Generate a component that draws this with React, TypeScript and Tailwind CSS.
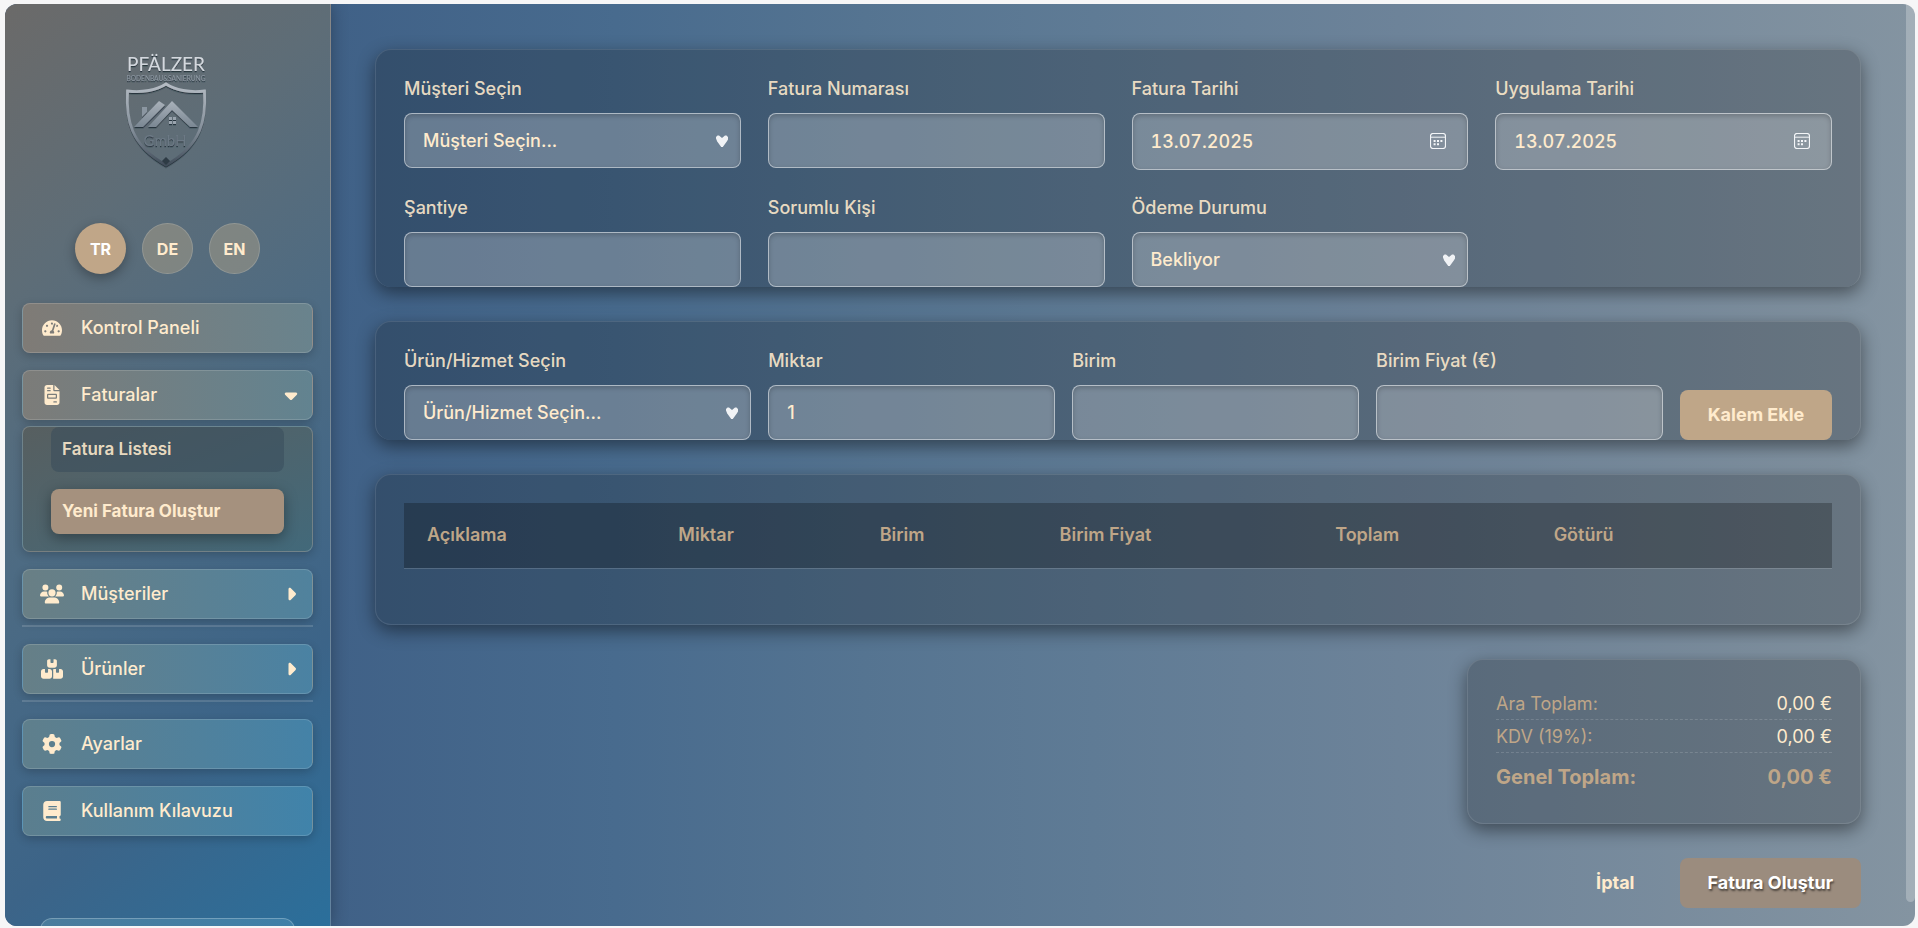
import type { ReactNode } from 'react';
import { useState } from 'react';
import { FaTachometerAlt } from 'react-icons/fa';
import {
  FaBook,
  FaBoxesStacked,
  FaCaretDown,
  FaCaretRight,
  FaFileInvoice,
  FaGear,
  FaUsers,
} from 'react-icons/fa6';

const cardClass =
  'rounded-2xl border border-white/10 bg-black/20 px-7 shadow-[0_6px_18px_rgba(0,0,0,0.45)]';
const fieldClass =
  'block w-full rounded-lg border border-white/45 bg-white/25 px-[18px] text-lg font-medium text-[#ffebcd] shadow-[inset_0_2px_5px_rgba(0,0,0,0.2)] outline-none';

function Logo() {
  return (
    <svg viewBox="0 0 84 118" className="h-[118px] w-[84px]" role="img" aria-label="Pfälzer Bodenbau & Sanierung GmbH">
      <defs>
        <linearGradient id="metal" x1="0" y1="0" x2="0" y2="1">
          <stop offset="0" stopColor="#b4bbc3" />
          <stop offset="0.55" stopColor="#86919c" />
          <stop offset="1" stopColor="#414d5a" />
        </linearGradient>
        <linearGradient id="roof" x1="0" y1="0" x2="0" y2="1">
          <stop offset="0" stopColor="#a9b1ba" />
          <stop offset="1" stopColor="#7a8793" />
        </linearGradient>
        <filter id="relief" x="-10%" y="-10%" width="120%" height="125%">
          <feDropShadow dx="0" dy="1.2" stdDeviation="0.6" floodColor="#1c2732" floodOpacity="0.8" />
        </filter>
      </defs>
      <g filter="url(#relief)">
        <text x="42" y="20" textAnchor="middle" fontFamily="Lato, sans-serif" fontSize="19" fill="#d3d8de">
          PFÄLZER
        </text>
        <text x="42" y="30" textAnchor="middle" fontFamily="Lato, sans-serif" fontSize="6.6" fill="#8d98a3">
          BODENBAU&amp;SANIERUNG
        </text>
        <path
          d="M42 33 C33 39 18 42 3.5 40 C2 68 6 94 42 114 C78 94 82 68 80.5 40 C66 42 51 39 42 33 Z"
          fill="none"
          stroke="url(#metal)"
          strokeWidth="2.8"
        />
        <path d="M10 76 L35 50 L41 54 L19 76 Z" fill="url(#roof)" />
        <path d="M18 66 V56 H23 V61 Z" fill="#8b96a1" />
        <path d="M24 76 L48 50 L74 76 H66 L48 59 L32 76 Z" fill="url(#roof)" />
        <path d="M45 66 h3 v3 h-3 z M49 66 h3 v3 h-3 z M45 70 h3 v3 h-3 z M49 70 h3 v3 h-3 z" fill="#9aa4ae" />
        <text x="41" y="95" textAnchor="middle" fontFamily="Lato, sans-serif" fontSize="15" fill="#6c7985">
          GmbH
        </text>
        <path d="M42 106 l4 4 -4 4 -4 -4 z" fill="#2f3a45" />
      </g>
    </svg>
  );
}

function Heart() {
  return (
    <svg
      viewBox="0 0 12 13"
      aria-hidden="true"
      className="pointer-events-none absolute top-1/2 right-[13px] h-[13px] w-3 -translate-y-1/2"
    >
      <path d="M0 4 V2.5 L1.5 1 H3 L6 3.5 L9 1 H10.5 L12 2.5 V5 L10.8 7 L6.8 12.6 H5.2 L1.2 7 Z" fill="#f0f2f5" />
    </svg>
  );
}

function CalendarIcon() {
  return (
    <svg viewBox="0 0 16 16" className="size-4" fill="none" aria-hidden="true">
      <rect x="0.5" y="0.5" width="15" height="15" rx="2.5" stroke="#f4f6f8" strokeWidth="1.2" />
      <path d="M0.5 4.2 H15.5" stroke="#f4f6f8" />
      <path
        d="M3.600 7h2v2h-2z M7 7h2v2H7z M10.4 7h2v2h-2z M3.600 10.2h2v2h-2z M7 10.2h2v2H7z"
        fill="#f4f6f8"
      />
    </svg>
  );
}

function Field({ id, label, children }: { id: string; label: string; children: ReactNode }) {
  return (
    <div>
      <label htmlFor={id} className="mb-[13px] block text-lg leading-[22px] font-medium text-[#ffebcd]/90">
        {label}
      </label>
      {children}
    </div>
  );
}

function TextField({ id, label, value = '' }: { id: string; label: string; value?: string }) {
  const [current, setCurrent] = useState(value);
  return (
    <Field id={id} label={label}>
      <input
        id={id}
        type="text"
        value={current}
        onChange={(e) => setCurrent(e.target.value)}
        className={`${fieldClass} h-[55px]`}
      />
    </Field>
  );
}

function DateField({ id, label }: { id: string; label: string }) {
  const [current, setCurrent] = useState('13.07.2025');
  return (
    <Field id={id} label={label}>
      <div className="relative">
        <input
          id={id}
          type="text"
          inputMode="numeric"
          value={current}
          onChange={(e) => setCurrent(e.target.value)}
          className={`${fieldClass} h-[57px] tabular-nums`}
        />
        <button type="button" aria-label={`${label}: takvim`} className="absolute top-5 right-[22px]">
          <CalendarIcon />
        </button>
      </div>
    </Field>
  );
}

function SelectField({ id, label, option }: { id: string; label: string; option: string }) {
  return (
    <Field id={id} label={label}>
      <div className="relative">
        <select id={id} className={`${fieldClass} h-[55px] appearance-none`}>
          <option>{option}</option>
        </select>
        <Heart />
      </div>
    </Field>
  );
}

function NavItem({
  icon,
  label,
  caret,
  tone,
}: {
  icon: ReactNode;
  label: string;
  caret?: ReactNode;
  tone: string;
}) {
  return (
    <a
      href="#"
      className={`flex h-[50px] shrink-0 items-center rounded-lg border border-white/15 bg-linear-to-r px-[13px] text-lg font-medium text-[#ffebcd] shadow-[0_3px_10px_rgba(0,0,0,0.2)] ${tone}`}
    >
      <span className="flex w-8 justify-center text-xl">{icon}</span>
      <span className="ml-[13px] flex-1">{label}</span>
      {caret && <span className="flex w-4 justify-center">{caret}</span>}
    </a>
  );
}

function Language({ code, active = false }: { code: string; active?: boolean }) {
  return (
    <button
      type="button"
      aria-pressed={active}
      className={`size-[51px] rounded-full text-base font-bold ${
        active
          ? 'bg-[#c0a688] text-white shadow-[0_4px_12px_rgba(0,0,0,0.3)]'
          : 'border border-white/15 bg-[#a89d88]/50 text-[#ffebcd]'
      }`}
    >
      {code}
    </button>
  );
}

function Sidebar() {
  return (
    <aside className="z-10 flex w-[326px] shrink-0 flex-col overflow-hidden border-r border-white/20 bg-linear-[140deg,#6b6a69_0%,#5e6d77_24%,#4d6b83_48%,#3c6488_76%,#2b6f9b_100%] px-[17px] shadow-[0_0_16px_rgba(0,0,0,0.3)]">
      <div className="flex shrink-0 justify-center pt-[47px] pr-1">
        <Logo />
      </div>
      <div className="mt-[54px] flex shrink-0 justify-center gap-4">
        <Language code="TR" active />
        <Language code="DE" />
        <Language code="EN" />
      </div>
      <nav className="mt-[29px] flex shrink-0 flex-col gap-[17px]">
        <NavItem icon={<FaTachometerAlt />} label="Kontrol Paneli" tone="from-[#7f7b76] to-[#69838d]" />
        <div>
          <NavItem
            icon={<FaFileInvoice />}
            label="Faturalar"
            caret={<FaCaretDown className="size-5 shrink-0" />}
            tone="from-[#7c7c79] to-[#628390]"
          />
          <ul className="mt-[6px] flex flex-col gap-[17px] rounded-lg border border-white/20 bg-linear-to-br from-[#575f60] to-[#42697a] px-7 pb-[17px] shadow-[0_3px_10px_rgba(0,0,0,0.2)]">
            <li>
              <a href="#" className="flex h-[45px] items-center rounded-lg bg-[#36495a]/50 px-[11px] text-[17px] font-semibold text-[#ffebcd]/90">
                Fatura Listesi
              </a>
            </li>
            <li>
              <a
                href="#"
                aria-current="page"
                className="flex h-[45px] items-center rounded-lg bg-[#a5917e] px-[11px] text-[17px] font-bold text-[#ffebcd] shadow-[0_4px_14px_rgba(0,0,0,0.35)]"
              >
                Yeni Fatura Oluştur
              </a>
            </li>
          </ul>
        </div>
        <div className="border-b-2 border-white/15 pb-[6px]">
          <NavItem
            icon={<FaUsers className="size-6" />}
            label="Müşteriler"
            caret={<FaCaretRight className="size-5 shrink-0" />}
            tone="from-[#697f85] to-[#50829d]"
          />
        </div>
        <div className="border-b-2 border-white/15 pb-[6px]">
          <NavItem
            icon={<FaBoxesStacked className="size-[22px]" />}
            label="Ürünler"
            caret={<FaCaretRight className="size-5 shrink-0" />}
            tone="from-[#667f87] to-[#4a82a3]"
          />
        </div>
        <NavItem icon={<FaGear />} label="Ayarlar" tone="from-[#5f7f8c] to-[#4482a7]" />
        <NavItem icon={<FaBook />} label="Kullanım Kılavuzu" tone="from-[#5b7e8e] to-[#4083aa]" />
      </nav>
      <button
        type="button"
        aria-label="Hesap"
        className="mx-[18px] mt-[82px] h-14 shrink-0 rounded-xl border border-white/25 bg-linear-to-r from-[#4a7c9c] to-[#3f80a8]"
      />
    </aside>
  );
}

const columns = [
  { title: 'Açıklama', width: 'w-[17.6%]' },
  { title: 'Miktar', width: 'w-[14.1%]' },
  { title: 'Birim', width: 'w-[12.6%]' },
  { title: 'Birim Fiyat', width: 'w-[19.3%]' },
  { title: 'Toplam', width: 'w-[15.3%]' },
  { title: 'Götürü', width: 'w-[21.1%]' },
];

export default function App() {
  return (
    <div className="h-screen bg-[#f6f6f7] pt-1 pr-[3px] pb-[2px] pl-[5px] font-['Inter',sans-serif]">
      <div className="flex h-full overflow-hidden rounded-xl bg-linear-[90deg,#35567c_0%,#406187_17%,#486b8e_32%,#557491_45%,#5f7b95_57%,#6d8399_73%,#8494a1_100%]">
        <Sidebar />
        <main className="flex-1 overflow-hidden pt-[45px] pr-[45px] pl-[44px]">
          <form onSubmit={(e) => e.preventDefault()} className="flex flex-col gap-[34px]">
            <section className={`${cardClass} grid grid-cols-4 gap-[27px] border-b-0 pt-7`}>
              <SelectField id="customer" label="Müşteri Seçin" option="Müşteri Seçin..." />
              <TextField id="number" label="Fatura Numarası" />
              <DateField id="invoice-date" label="Fatura Tarihi" />
              <DateField id="service-date" label="Uygulama Tarihi" />
              <TextField id="site" label="Şantiye" />
              <TextField id="contact" label="Sorumlu Kişi" />
              <SelectField id="status" label="Ödeme Durumu" option="Bekliyor" />
            </section>

            <section
              className={`${cardClass} grid grid-cols-[1.21fr_1fr_1fr_1fr_152px] items-end gap-[17px] border-b-0 pt-7`}
            >
              <SelectField id="product" label="Ürün/Hizmet Seçin" option="Ürün/Hizmet Seçin..." />
              <TextField id="quantity" label="Miktar" value="1" />
              <TextField id="unit" label="Birim" />
              <TextField id="price" label="Birim Fiyat (€)" />
              <button type="button" className="h-[50px] rounded-lg bg-[#bfa688] text-lg font-bold text-[#ffebcd]">
                Kalem Ekle
              </button>
            </section>

            <section className={`${cardClass} pt-7 pb-[55px]`}>
              <table className="w-full table-fixed border-collapse">
                <thead>
                  <tr className="border-b border-white/15 bg-black/25">
                    {columns.map((c) => (
                      <th
                        key={c.title}
                        scope="col"
                        className={`${c.width} h-[65px] px-[23px] text-left text-lg font-semibold text-[#bfa688]`}
                      >
                        {c.title}
                      </th>
                    ))}
                  </tr>
                </thead>
                <tbody />
              </table>
            </section>

            <section className={`${cardClass} w-[394px] self-end pt-[27px] pb-7 text-lg leading-[27px]`}>
              <dl>
                <div className="flex justify-between border-b border-dashed border-white/15 pt-[3px] pb-[2px]">
                  <dt className="text-[#bfa688]">Ara Toplam:</dt>
                  <dd className="text-[#ffebcd]">0,00 €</dd>
                </div>
                <div className="flex justify-between border-b border-dashed border-white/15 pt-[3px] pb-[2px]">
                  <dt className="text-[#bfa688]">KDV (19%):</dt>
                  <dd className="text-[#ffebcd]">0,00 €</dd>
                </div>
                <div className="flex justify-between pt-[10px] pb-1 text-xl leading-[28px] font-bold text-[#bfa688]">
                  <dt>Genel Toplam:</dt>
                  <dd>0,00 €</dd>
                </div>
              </dl>
            </section>

            <div className="flex justify-end gap-[17px]">
              <button type="button" className="h-[50px] px-7 text-lg font-bold text-[#ffebcd]">
                İptal
              </button>
              <button
                type="submit"
                className="h-[50px] rounded-lg bg-[#9b8c7e] px-7 text-lg font-bold text-white [text-shadow:1px_2px_2px_rgba(0,0,0,0.5)]"
              >
                Fatura Oluştur
              </button>
            </div>
          </form>
        </main>
        <div className="w-[9px] shrink-0">
          <div className="h-[97.4%] rounded-b-md bg-white/25" />
        </div>
      </div>
    </div>
  );
}
